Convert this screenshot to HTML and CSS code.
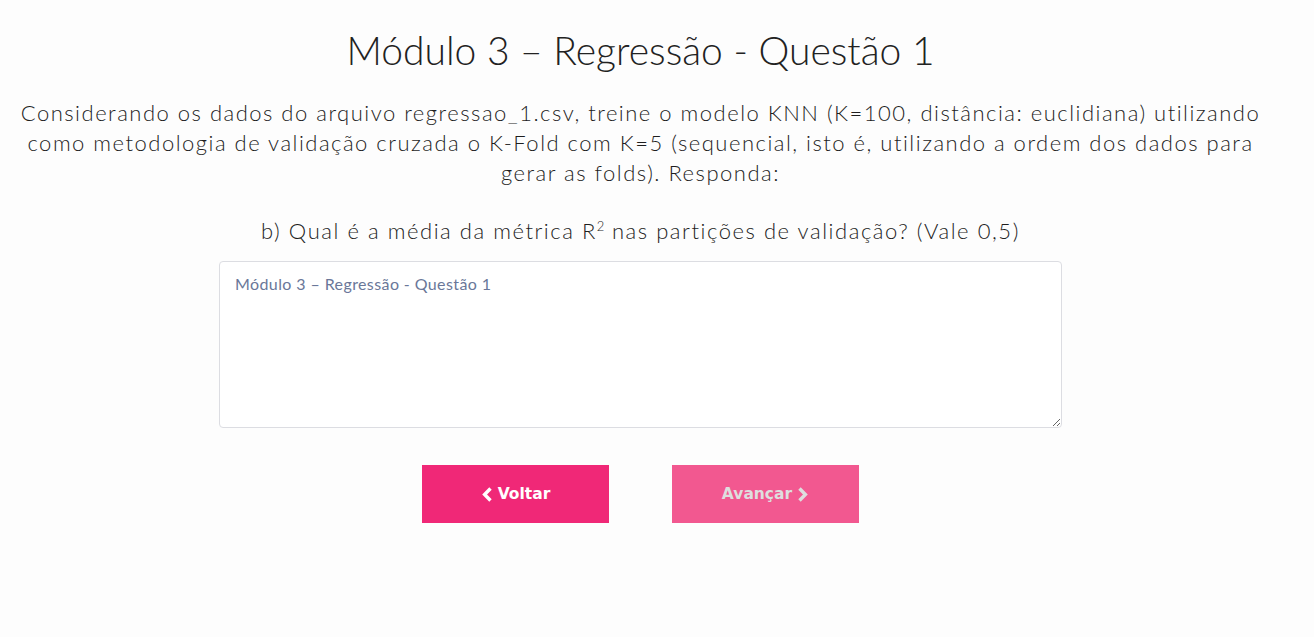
FILE: index.html
```html
<!DOCTYPE html>
<html lang="pt-BR">
<head>
<meta charset="utf-8">
<title>Módulo 3 – Regressão - Questão 1</title>
<link rel="stylesheet" href="styles.css">
</head>
<body>
<main class="page">
  <h1 class="title">Módulo 3 – Regressão - Questão 1</h1>
  <p class="statement">Considerando os dados do arquivo regressao_1.csv, treine o modelo KNN (K=100, distância: euclidiana) utilizando como metodologia de validação cruzada o K-Fold com K=5 (sequencial, isto é, utilizando a ordem dos dados para gerar as folds). Responda:</p>
  <p class="question">b) Qual é a média da métrica R<sup>2</sup> nas partições de validação? (Vale 0,5)</p>
  <textarea class="answer" placeholder="Módulo 3 – Regressão - Questão 1"></textarea>
  <div class="actions">
    <button class="btn btn-back" type="button"><svg class="chev" viewBox="0 0 12 15" width="12" height="15"><path d="M9.5 1.5 L3.6 7.5 L9.5 13.5" fill="none" stroke="currentColor" stroke-width="3.4"/></svg>Voltar</button>
    <button class="btn btn-next" type="button">Avançar<svg class="chev" viewBox="0 0 12 15" width="12" height="15"><path d="M2.5 1.5 L8.4 7.5 L2.5 13.5" fill="none" stroke="currentColor" stroke-width="3.4"/></svg></button>
  </div>
</main>
</body>
</html>
```
FILE: styles.css
```css
html, body {
  margin: 0;
  padding: 0;
  background: #fdfdfd;
}
body {
  font-family: "Lato", "Open Sans", sans-serif;
  color: #2b2b2b;
}
.page {
  width: 1281px;
  display: flex;
  flex-direction: column;
  align-items: center;
  padding-top: 26px;
}
.title {
  margin: 0;
  font-size: 39px;
  font-weight: 300;
  line-height: 48px;
  color: #222;
}
.statement {
  margin: 24px 0 0;
  width: 1250px;
  text-align: center;
  font-size: 22px;
  font-weight: 300;
  letter-spacing: 1.5px;
  line-height: 30px;
  color: #1e1e1e;
}
.question {
  margin: 28px 0 0;
  font-size: 22px;
  font-weight: 300;
  letter-spacing: 1.55px;
  line-height: 30px;
  color: #1e1e1e;
}
.question sup {
  font-size: 13px;
  line-height: 0;
  letter-spacing: 0;
}
.answer {
  margin-top: 15px;
  box-sizing: border-box;
  width: 843px;
  height: 167px;
  border: 1px solid #dcdde2;
  border-radius: 4px;
  background: #fff;
  padding: 12px 15px;
  font-family: "Lato", sans-serif;
  font-size: 16px;
  letter-spacing: 0.4px;
  color: #333;
  resize: vertical;
}
.answer::placeholder {
  color: #6a7799;
}
.actions {
  margin-top: 37px;
  display: flex;
  gap: 63px;
}
.btn {
  width: 187px;
  height: 58px;
  border: none;
  border-radius: 0;
  font-family: "DejaVu Sans", Verdana, sans-serif;
  font-weight: bold;
  font-size: 15.5px;
  display: flex;
  align-items: center;
  justify-content: center;
  gap: 5px;
  cursor: pointer;
}
.btn-back {
  background: #f02877;
  color: #fff;
}
.btn-next {
  background: #f25890;
  color: #dedede;
}
.chev {
  display: block;
}
```
